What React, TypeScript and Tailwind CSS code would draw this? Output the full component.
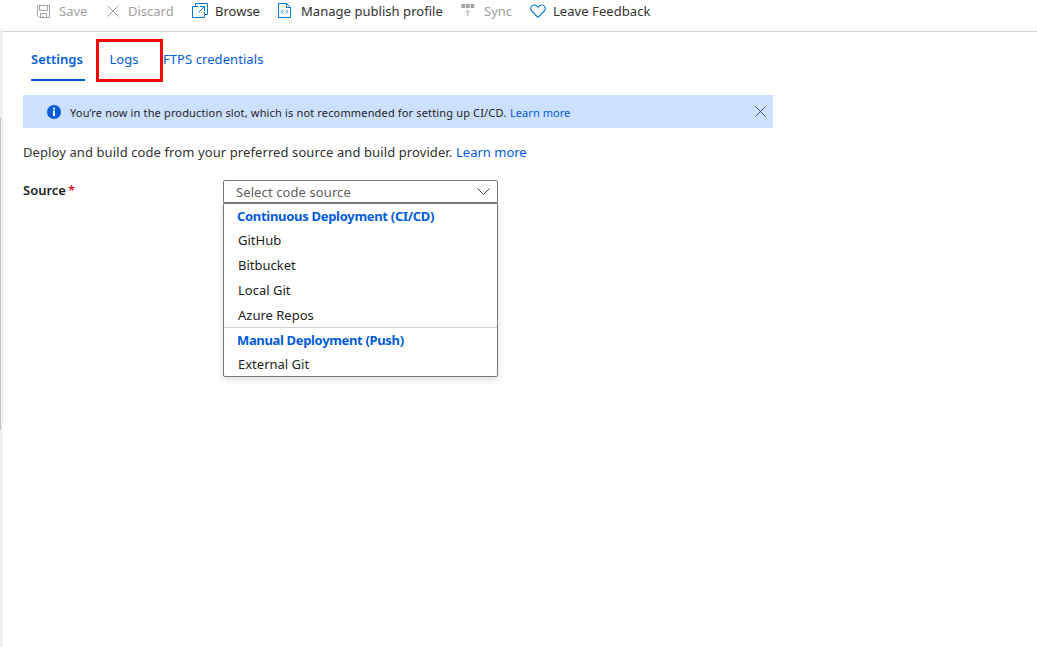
import type { ReactNode } from "react";

function SaveIcon() {
  return (
    <svg width="14" height="14" viewBox="0 0 14 14" fill="none" stroke="#a19f9d" strokeWidth="0.95">
      <path d="M.5 1.5h12v12h-10l-2-2z M2.5 1.5v5h8v-5 M3.5 13.5v-4h6v4 M5.5 11.5v2" />
    </svg>
  );
}

function CrossIcon({ size, color }: { size: number; color: string }) {
  return (
    <svg width={size} height={size} viewBox="0 0 12 12" fill="none" stroke={color} strokeWidth="1">
      <path d="M.5.5l11 11M11.5.5l-11 11" />
    </svg>
  );
}

function BrowseIcon() {
  return (
    <svg width="16" height="15" viewBox="0 0 16 15" fill="none" stroke="#0078d4">
      <path d="M3.5 3.5v-3h12v11h-3 M6 3.5H.5v11h12V9 M6.5 9.5l5.5-5.5 M8 3.5h4.5V8" />
    </svg>
  );
}

function ProfileIcon() {
  return (
    <svg width="13" height="15" viewBox="0 0 13 15" fill="none" stroke="#0078d4">
      <path d="M.5.5h8l4 4v10H.5z M8.5.5v4h4 M5 6.7L3.2 8.6 5 10.5 M8 6.7l1.8 1.9L8 10.5" />
    </svg>
  );
}

function SyncIcon() {
  return (
    <svg width="14" height="13" viewBox="0 0 14 13" fill="none">
      <path d="M.5 0h3.7v4H.5z M5 0h3.7v4H5z M9.6 0h3.7v4H9.6z" fill="#a6a4a2" />
      <path d="M6.8 12V6.5 M5 8.3l1.8-1.8 1.8 1.8" stroke="#a6a4a2" />
    </svg>
  );
}

function HeartIcon() {
  return (
    <svg width="16" height="14" viewBox="0 0 16 14" fill="none" stroke="#0078d4" strokeWidth="1.1">
      <path d="M8 13.3L1.7 7C-.3 4.8.8 1.2 4.1 1 5.9.9 7 2 8 3.2 9 2 10.1.9 11.9 1c3.3.2 4.4 3.8 2.4 6z" />
    </svg>
  );
}

function InfoIcon() {
  return (
    <svg width="14" height="14" viewBox="0 0 14 14">
      <circle cx="7" cy="7" r="7" fill="#015cda" />
      <path d="M6 5.6h2V11H6z M6 2.7h2v1.8H6z" fill="#fff" />
    </svg>
  );
}

type CommandProps = { icon: ReactNode; label: string; box: string; gap: string; text: string };

function Command({ icon, label, box, gap, text }: CommandProps) {
  return (
    <button className={`flex h-[22px] shrink-0 items-center whitespace-nowrap ${box} ${gap}`}>
      <span className="-mt-px flex shrink-0">{icon}</span>
      <span className={text}>{label}</span>
    </button>
  );
}

function Option({ label }: { label: string }) {
  return <li className="flex h-[25px] items-center pb-0.5 pl-3.5">{label}</li>;
}

export default function App() {
  return (
    <div className="flex h-[647px] w-[1037px] overflow-hidden bg-white font-['Noto_Sans',sans-serif] text-[13px] leading-[18px] text-[#323130]">
      <aside className="mt-[29px] w-[3px] shrink-0 bg-[#f0f0f0] pt-[89px]">
        <div className="h-[312px] w-px bg-[#c1c1c1]" />
      </aside>
      <div className="min-w-0 flex-1">
        <header className="flex h-8 items-start border-b border-[#d2d0ce] pl-[34px]">
          <Command icon={<SaveIcon />} label="Save" box="w-[70px]" gap="gap-2" text="text-[#a19f9d]" />
          <Command icon={<CrossIcon size={12} color="#a19f9d" />} label="Discard" box="w-[85px]" gap="gap-[9px]" text="text-[#a19f9d]" />
          <Command icon={<BrowseIcon />} label="Browse" box="w-[86px]" gap="gap-[7px]" text="" />
          <Command icon={<ProfileIcon />} label="Manage publish profile" box="w-[183px]" gap="gap-[10px]" text="tracking-[0.04px]" />
          <Command icon={<SyncIcon />} label="Sync" box="w-[69px]" gap="gap-[9px]" text="text-[#a19f9d]" />
          <Command icon={<HeartIcon />} label="Leave Feedback" box="w-[140px]" gap="gap-[7px]" text="tracking-[0.06px]" />
        </header>
        <nav className="flex h-[63px] pl-7 pt-[6px] text-[#015cda]">
          <button className="mt-[6px] flex h-[37px] w-[54px] items-start whitespace-nowrap border-b-2 border-[#015cda] pt-[6px] font-semibold">Settings</button>
          <button className="ml-[11px] flex h-[43px] w-[67px] items-start border-[3px] border-[#fb0007] pl-[10.5px] mt-px pt-2">Logs</button>
          <button className="flex h-11 items-start whitespace-nowrap pt-3 tracking-[0.07px]">FTPS credentials</button>
        </nav>
        <main className="pl-5">
          <div className="flex h-[33px] w-[750px] items-center bg-[#cce0ff] pl-6 pr-[7px] text-[11px] text-[#1f1f1f]">
            <InfoIcon />
            <p className="ml-[9px] mt-[3px] w-[440px] whitespace-nowrap tracking-[0.155px]">You’re now in the production slot, which is not recommended for setting up CI/CD.</p>
            <a className="mt-[3px] flex-1 tracking-[0.05px] text-[#015cda]">Learn more</a>
            <button className="-mt-px"><CrossIcon size={11} color="#484644" /></button>
          </div>
          <div className="mt-[15px] flex whitespace-nowrap">
            <p className="w-[433px] tracking-[0.095px]">Deploy and build code from your preferred source and build provider.</p>
            <a className="text-[#015cda]">Learn more</a>
          </div>
          <div className="mt-[19px] flex items-start">
            <label className="mt-px flex w-[200px] gap-[2px] font-semibold text-[#201f1e]">
              Source<span className="text-[#e81123]">*</span>
            </label>
            <div className="w-[275px]">
              <div className="flex h-[23px] items-center justify-between rounded-t-xs border border-[#7a7877] pl-3 pr-[7px] text-[#605e5c]">
                <span className="tracking-[0.1px]">Select code source</span>
                <svg width="13" height="7" viewBox="0 0 13 7" fill="none" stroke="#484644"><path d="M.5.5l6 6 6-6" /></svg>
              </div>
              <ul className="h-[174px] rounded-b-xs border border-[#7a7877] text-[#201f1e] shadow-[0_3px_7px_rgba(0,0,0,0.13)]">
                <li className="flex h-6 items-center pl-[13px] font-bold tracking-[-0.3px] text-[#015cda]">Continuous Deployment (CI/CD)</li>
                <Option label="GitHub" />
                <Option label="Bitbucket" />
                <Option label="Local Git" />
                <Option label="Azure Repos" />
                <li className="-mt-px flex h-[25px] items-center border-t border-[#c8d0d8] pl-[13px] font-bold tracking-[-0.34px] text-[#015cda]">Manual Deployment (Push)</li>
                <Option label="External Git" />
              </ul>
            </div>
          </div>
        </main>
      </div>
    </div>
  );
}
